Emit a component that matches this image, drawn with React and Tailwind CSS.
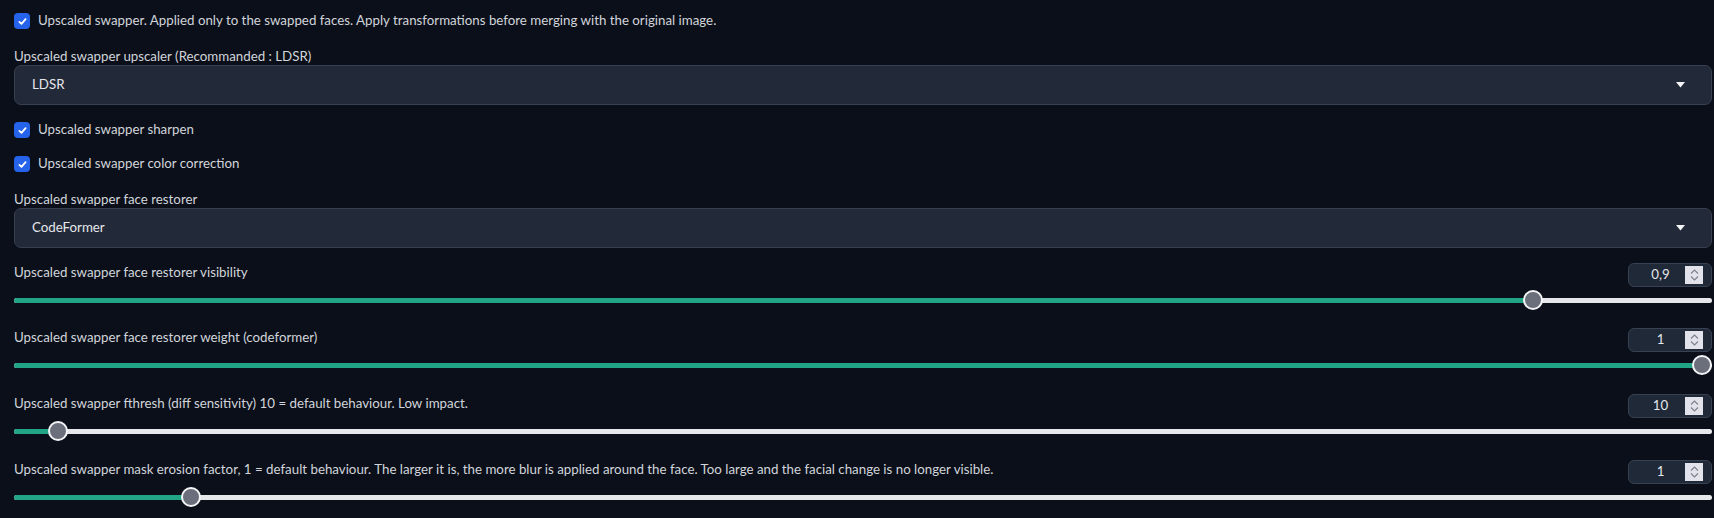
import React from "react";

const TXT = "text-[13.3px] text-[#d1d5db]";

function Check({ label }) {
  return (
    <label className="flex items-center gap-[8px] h-[20px]">
      <span className="w-[16px] h-[16px] rounded-[4px] bg-[#2563eb] flex items-center justify-center shrink-0">
        <svg width="11" height="11" viewBox="0 0 16 16">
          <path d="M3.5 8.5 L6.5 11.5 L12.5 4.5" fill="none" stroke="white" strokeWidth="2.6" strokeLinecap="round" strokeLinejoin="round" />
        </svg>
      </span>
      <span className={TXT}>{label}</span>
    </label>
  );
}

function Dropdown({ label, value }) {
  return (
    <div className="flex flex-col">
      <div className={`${TXT} leading-[18px]`}>{label}</div>
      <div className="h-[40px] rounded-[7px] bg-[#222938] border border-[#374151] flex items-center justify-between pl-[17px] pr-[26px]">
        <span className="text-[13.3px] text-[#e5e7eb]">{value}</span>
        <svg width="9" height="6" viewBox="0 0 9 6">
          <path d="M0 0 L9 0 L4.5 5.5 Z" fill="#f3f4f6" />
        </svg>
      </div>
    </div>
  );
}

function Slider({ label, value, pct }) {
  return (
    <div className="flex flex-col">
      <div className="flex items-center justify-between h-[24px]">
        <span className={`${TXT} -mt-[5px]`}>{label}</span>
        <div className="w-[84px] h-[24px] rounded-[6px] bg-[#1f2937] border border-[#374151] flex items-center pl-[7px] pr-[8px]">
          <span className="w-[49px] text-center text-[13.3px] text-[#e5e7eb]">{value}</span>
          <span className="w-[18px] h-[18px] bg-[#e2e2ea] flex flex-col items-center justify-center gap-[2px]">
            <svg width="9" height="5" viewBox="0 0 9 5"><path d="M1 4.5 L4.5 1 L8 4.5" fill="none" stroke="#7b7f8c" strokeWidth="1.1" /></svg>
            <svg width="9" height="5" viewBox="0 0 9 5"><path d="M1 0.5 L4.5 4 L8 0.5" fill="none" stroke="#7b7f8c" strokeWidth="1.1" /></svg>
          </span>
        </div>
      </div>
      <div className="relative h-[20px] mt-[3px] flex items-center">
        <div className="w-full h-[5px] rounded-full bg-[#e5e7eb] overflow-hidden">
          <div className="h-full bg-[#22a586]" style={{ width: `calc(10px + (100% - 20px) * ${pct})` }} />
        </div>
        <div
          className="absolute w-[20px] h-[20px] rounded-full bg-[#6b6e7b] border-[2px] border-[#f3f4f6]"
          style={{ left: `calc((100% - 20px) * ${pct})` }}
        />
      </div>
    </div>
  );
}

export default function App() {
  return (
    <div className="w-[1714px] h-[518px] bg-[#0b0f19] pl-[14px] pt-[11px]" style={{ fontFamily: "Lato, sans-serif" }}>
      <div className="w-[1698px] flex flex-col">
        <Check label="Upscaled swapper. Applied only to the swapped faces. Apply transformations before merging with the original image." />
        <div className="mt-[16px]">
          <Dropdown label="Upscaled swapper upscaler (Recommanded : LDSR)" value="LDSR" />
        </div>
        <div className="mt-[15px]"><Check label="Upscaled swapper sharpen" /></div>
        <div className="mt-[14px]"><Check label="Upscaled swapper color correction" /></div>
        <div className="mt-[16px]">
          <Dropdown label="Upscaled swapper face restorer" value="CodeFormer" />
        </div>
        <div className="mt-[15px]"><Slider label="Upscaled swapper face restorer visibility" value="0,9" pct={0.899} /></div>
        <div className="mt-[18px]"><Slider label="Upscaled swapper face restorer weight (codeformer)" value="1" pct={1} /></div>
        <div className="mt-[19px]"><Slider label="Upscaled swapper fthresh (diff sensitivity) 10 = default behaviour. Low impact." value="10" pct={0.0203} /></div>
        <div className="mt-[19px]"><Slider label="Upscaled swapper mask erosion factor, 1 = default behaviour. The larger it is, the more blur is applied around the face. Too large and the facial change is no longer visible." value="1" pct={0.0995} /></div>
      </div>
    </div>
  );
}
